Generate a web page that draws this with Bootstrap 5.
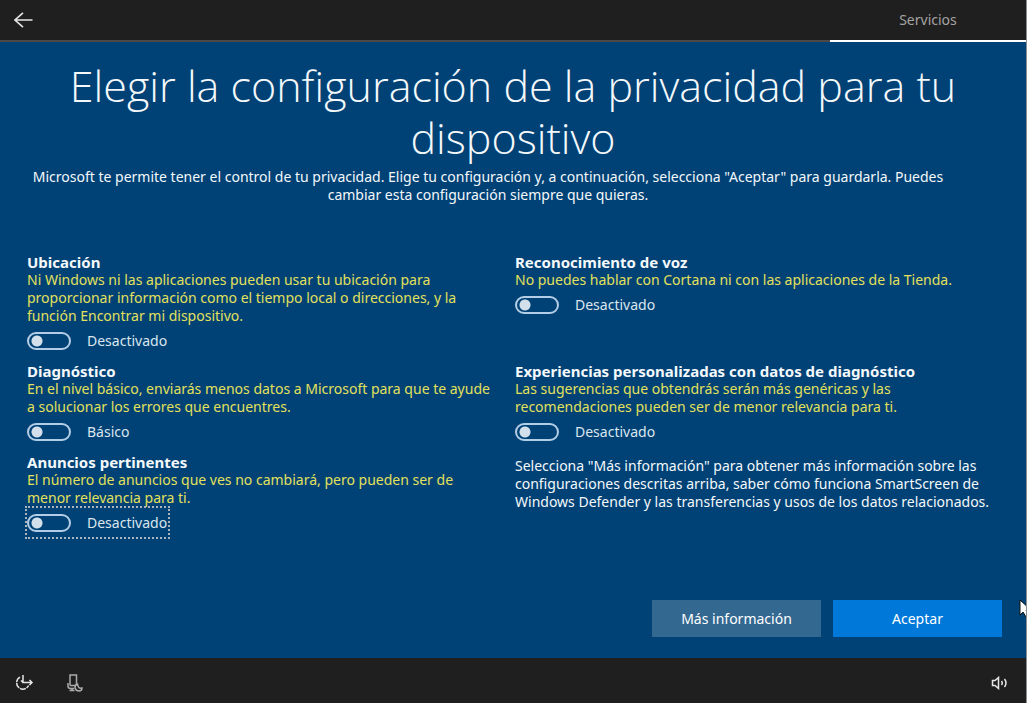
<!DOCTYPE html>
<html lang="es">
<head>
<meta charset="utf-8">
<meta name="viewport" content="width=device-width, initial-scale=1">
<title>Configuración de la privacidad</title>
<link href="https://cdn.jsdelivr.net/npm/bootstrap@5.3.0/dist/css/bootstrap.min.css" rel="stylesheet">
<style>
  body { background: #004275; color: #f4f8fb; font: 14px/18px "Noto Sans", "Open Sans", sans-serif; }
  .shell { border-right: 1px solid #8a8f94; overflow: hidden; }
  .topbar { background: #1f1f1f; height: 42px; border-bottom: 2px solid #4c4947; padding-left: 14px; }
  .step-tab { width: 196px; height: 42px; color: #a3a3a3; border-bottom: 2px solid #fff; }
  .icon-btn { color: #e6e6e6; background: none; border: 0; padding: 0; display: flex; }
  .headline { font-family: "Open Sans", "Noto Sans", sans-serif; font-size: 43px; line-height: 52px; font-weight: 300; margin: 0; padding: 18px 48px 0; }
  .intro { margin: 4px 76px 0 26px; }
  .settings { margin: 49px 26px 0 27px; column-gap: 16px; display: grid; grid-template-columns: 472px 1fr; }
  .setting h2 { font-size: 15px; line-height: 18px; font-weight: 700; margin: 0; }
  .setting p { color: #e3e05c; margin: 0; }
  .toggle-line { display: flex; width: fit-content; align-items: center; gap: 16px; height: 31px; margin-bottom: 6px; color: #dbe6ef; }
  .toggle-line.focused { outline: 2px dotted #a9b4bd; outline-offset: -1px; margin-left: -1px; padding: 0 2px 0 1px; }
  .toggle-line .form-check-input { width: 44px; height: 18px; margin: 0; border: 2px solid #b4cde6; border-radius: 9px; background-color: transparent;
    background-image: radial-gradient(circle at 8px 7px, #d3dfea 5px, transparent 6px); background-size: 100% 100%; background-position: 0 0; box-shadow: none; }
  .note { padding-top: 4px; }
  .action { width: 169px; height: 37px; border: 0; border-radius: 0; color: #fff; font-size: 14px; line-height: 18px; padding: 0; }
  .action-more { background: #336891; }
  .action-ok { background: #0078d9; }
  .actions { gap: 12px; padding: 0 24px 21px; }
  .bottombar { background: #1f1f1f; height: 45px; padding: 4px 18px 0 14px; gap: 32px; }
  .pointer { position: absolute; right: -5px; top: 0; }
</style>
</head>
<body>
<div class="shell d-flex flex-column min-vh-100 position-relative">
  <header class="topbar d-flex justify-content-between">
    <button class="icon-btn align-items-center" type="button" aria-label="Atrás">
      <svg width="19" height="16" viewBox="0 0 19 16" fill="none" stroke="currentColor" stroke-width="1.600"><path d="M18.500 8H1M9 .8L1 8l8 7.200"/></svg>
    </button>
    <a href="#" class="step-tab d-flex align-items-center justify-content-center text-decoration-none">Servicios</a>
  </header>

  <main class="flex-grow-1 d-flex flex-column">
    <h1 class="headline text-center">Elegir la configuración de la privacidad para tu dispositivo</h1>
    <p class="intro text-center">Microsoft te permite tener el control de tu privacidad. Elige tu configuración y, a continuación, selecciona "Aceptar" para guardarla. Puedes cambiar esta configuración siempre que quieras.</p>

    <div class="settings">
      <section class="setting">
        <h2>Ubicación</h2>
        <p>Ni Windows ni las aplicaciones pueden usar tu ubicación para proporcionar información como el tiempo local o direcciones, y la función Encontrar mi dispositivo.</p>
        <label class="toggle-line"><input class="form-check-input" type="checkbox" role="switch">Desactivado</label>
      </section>
      <section class="setting">
        <h2>Reconocimiento de voz</h2>
        <p>No puedes hablar con Cortana ni con las aplicaciones de la Tienda.</p>
        <label class="toggle-line"><input class="form-check-input" type="checkbox" role="switch">Desactivado</label>
      </section>
      <section class="setting">
        <h2>Diagnóstico</h2>
        <p>En el nivel básico, enviarás menos datos a Microsoft para que te ayude a solucionar los errores que encuentres.</p>
        <label class="toggle-line"><input class="form-check-input" type="checkbox" role="switch">Básico</label>
      </section>
      <section class="setting">
        <h2>Experiencias personalizadas con datos de diagnóstico</h2>
        <p>Las sugerencias que obtendrás serán más genéricas y las recomendaciones pueden ser de menor relevancia para ti.</p>
        <label class="toggle-line"><input class="form-check-input" type="checkbox" role="switch">Desactivado</label>
      </section>
      <section class="setting">
        <h2>Anuncios pertinentes</h2>
        <p>El número de anuncios que ves no cambiará, pero pueden ser de menor relevancia para ti.</p>
        <label class="toggle-line focused"><input class="form-check-input" type="checkbox" role="switch">Desactivado</label>
      </section>
      <div class="note">Selecciona "Más información" para obtener más información sobre las configuraciones descritas arriba, saber cómo funciona SmartScreen de Windows Defender y las transferencias y usos de los datos relacionados.</div>
    </div>

    <div class="actions d-flex justify-content-end mt-auto position-relative">
      <button class="btn action action-more" type="button">Más información</button>
      <button class="btn action action-ok" type="button">Aceptar</button>
      <svg class="pointer" width="12" height="18" viewBox="0 0 12 18"><path d="M1 0v15l3-3 3 5 3-1-3-6h5z" fill="#fff" stroke="#111" stroke-width="1"/></svg>
    </div>
  </main>

  <footer class="bottombar d-flex align-items-center">
    <button class="icon-btn" type="button" aria-label="Accesibilidad">
      <svg width="20" height="18" viewBox="0 0 20 18" fill="none" stroke="currentColor" stroke-width="1.500"><path d="M9 1v7.500h9M15.500 6l2.500 2.500L15.500 11M7 6.500l2 2"/><path d="M6 3.200a6.300 6.300 0 1 0 8.600 8.300" stroke-dasharray="6 .8"/></svg>
    </button>
    <button class="icon-btn" type="button" aria-label="Micrófono">
      <svg width="18" height="18" viewBox="0 0 18 18" fill="none" stroke="#aaa" stroke-width="1.500"><path d="M4 11.500V1h6.500v9M4 11.500h5M2 9v3q0 2.500 2.500 2.500H8M6 14v2.500M3.500 16.500h5"/><path d="M11.500 10q-3 1-2.500 4 1 3 4 3 3 0 3-3-4 1-4.500-4z"/></svg>
    </button>
    <button class="icon-btn ms-auto" type="button" aria-label="Volumen">
      <svg width="17" height="14" viewBox="0 0 17 14" fill="none" stroke="currentColor" stroke-width="1.500"><path d="M1.500 4.500H4L7.500 1.500v11L4 9.500H1.500zM10.500 5q1.500 2 0 4M13.500 3q3 4 0 8"/></svg>
    </button>
  </footer>
</div>
<script src="https://cdn.jsdelivr.net/npm/bootstrap@5.3.0/dist/js/bootstrap.bundle.min.js"></script>
</body>
</html>
